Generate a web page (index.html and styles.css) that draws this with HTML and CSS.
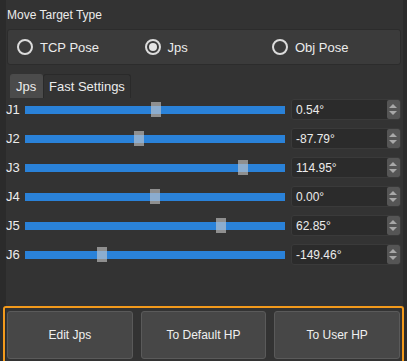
FILE: index.html
```html
<!DOCTYPE html>
<html lang="en">
<head>
    <meta charset="UTF-8">
    <title>Move Target Type</title>
    <link rel="stylesheet" href="styles.css">
</head>
<body>
    <div class="panel">
        <div class="title">Move Target Type</div>

        <div class="radio-box">
            <label class="radio"><span class="dot"></span>TCP Pose</label>
            <label class="radio checked"><span class="dot"></span>Jps</label>
            <label class="radio"><span class="dot"></span>Obj Pose</label>
        </div>

        <div class="tabs">
            <div class="tab active">Jps</div>
            <div class="tab">Fast Settings</div>
        </div>

        <div class="rows">
            <div class="row">
                <span class="name">J1</span>
                <div class="slider"><span class="handle" style="left: 50.4%"></span></div>
                <div class="spin"><span class="val">0.54°</span><span class="arrows"></span></div>
            </div>
            <div class="row">
                <span class="name">J2</span>
                <div class="slider"><span class="handle" style="left: 43.8%"></span></div>
                <div class="spin"><span class="val">-87.79°</span><span class="arrows"></span></div>
            </div>
            <div class="row">
                <span class="name">J3</span>
                <div class="slider"><span class="handle" style="left: 83.8%"></span></div>
                <div class="spin"><span class="val">114.95°</span><span class="arrows"></span></div>
            </div>
            <div class="row">
                <span class="name">J4</span>
                <div class="slider"><span class="handle" style="left: 50%"></span></div>
                <div class="spin"><span class="val">0.00°</span><span class="arrows"></span></div>
            </div>
            <div class="row">
                <span class="name">J5</span>
                <div class="slider"><span class="handle" style="left: 75.4%"></span></div>
                <div class="spin"><span class="val">62.85°</span><span class="arrows"></span></div>
            </div>
            <div class="row">
                <span class="name">J6</span>
                <div class="slider"><span class="handle" style="left: 29.6%"></span></div>
                <div class="spin"><span class="val">-149.46°</span><span class="arrows"></span></div>
            </div>
        </div>

        <div class="actions">
            <button>Edit Jps</button>
            <button>To Default HP</button>
            <button>To User HP</button>
        </div>
    </div>
</body>
</html>
```

FILE: styles.css
```css
*{
    padding: 0;
    margin: 0;
    box-sizing: border-box;
    font-family: "Liberation Sans", Arial, sans-serif;
}
body{
    background-color: #2b2b2b;
    width: 407px;
    height: 361px;
    overflow: hidden;
}
.panel{
    margin-left: 6px;
    width: 397px;
    height: 361px;
    background-color: #333333;
    color: #ececec;
    display: flex;
    flex-direction: column;
}
.title{
    height: 29px;
    padding-left: 1px;
    font-size: 12px;
    line-height: 30px;
}
.radio-box{
    margin: 0 2px 0 1px;
    height: 36px;
    background-color: #3b3b3b;
    border: 1px solid #2c2c2c;
    border-radius: 3px;
    display: flex;
    align-items: center;
    padding-left: 9px;
}
.radio{
    width: 127.5px;
    display: flex;
    align-items: center;
    gap: 7px;
    font-size: 13px;
}
.dot{
    width: 16px;
    height: 16px;
    border: 2px solid #dcdcdc;
    border-radius: 50%;
    display: flex;
    align-items: center;
    justify-content: center;
}
.radio.checked .dot::after{
    content: "";
    width: 8px;
    height: 8px;
    border-radius: 50%;
    background-color: #e4e4e4;
}
.tabs{
    margin-top: 9px;
    padding-left: 4px;
    display: flex;
    height: 24px;
}
.tab{
    padding: 0 5px;
    font-size: 13px;
    line-height: 24px;
    border: 1px solid #2a2a2a;
    border-bottom: none;
    border-radius: 3px 3px 0 0;
}
.tab.active{
    width: 33px;
    background-color: #4b4b4b;
    border-color: #4b4b4b;
}
.rows{
    padding-top: 1px;
    display: flex;
    flex-direction: column;
    gap: 8px;
}
.row{
    height: 21px;
    display: flex;
    align-items: center;
}
.name{
    width: 19px;
    font-size: 13px;
}
.slider{
    position: relative;
    width: 260px;
    height: 8px;
    background-color: #2a82d9;
}
.handle{
    position: absolute;
    top: -3.5px;
    width: 10px;
    height: 15px;
    transform: translateX(-50%);
    background-color: rgba(200, 200, 200, 0.62);
}
.spin{
    margin-left: 6px;
    width: 110px;
    height: 21px;
    background-color: #2b2b2b;
    border: 1px solid #3a3a3a;
    border-radius: 3px;
    display: flex;
    align-items: center;
    justify-content: space-between;
}
.val{
    padding-left: 4px;
    font-size: 12px;
}
.arrows{
    position: relative;
    width: 13px;
    height: 19px;
    margin-right: 0;
    background-color: #555555;
    border-radius: 2px;
}
.arrows::before, .arrows::after{
    content: "";
    position: absolute;
    left: 2px;
    border-left: 4.5px solid transparent;
    border-right: 4.5px solid transparent;
}
.arrows::before{
    top: 4px;
    border-bottom: 4px solid #a8a8a8;
}
.arrows::after{
    bottom: 4px;
    border-top: 4px solid #a8a8a8;
}
.actions{
    margin: auto 0 0 -3px;
    width: 401px;
    height: 55px;
    border: 2px solid #f39a1c;
    border-bottom: none;
    border-radius: 3px 3px 0 0;
    display: flex;
    gap: 8px;
    padding: 3px 2px 0 2px;
}
.actions button{
    flex: 1;
    height: 48px;
    background-color: #474747;
    border: 1px solid #5a5a5a;
    border-radius: 3px;
    color: #f0f0f0;
    font-size: 12px;
}
```
